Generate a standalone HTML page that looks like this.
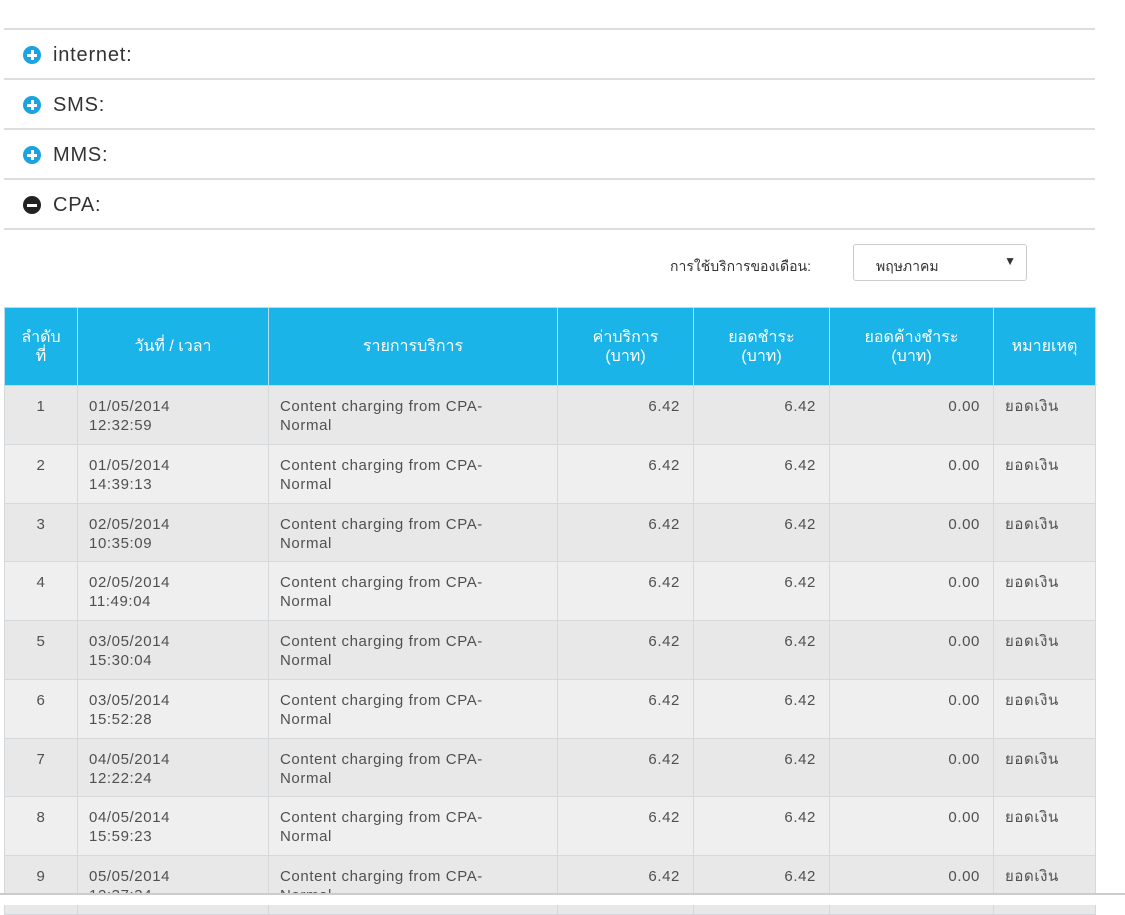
<!DOCTYPE html>
<html><head><meta charset="utf-8"><style>
body{margin:0;width:1125px;height:897px;overflow:hidden;background:#fff;font-family:"Liberation Sans","DejaVu Sans",sans-serif;color:#444;position:relative}
.sec{position:absolute;left:4px;width:1091px;border-top:2px solid #ddd;height:48px}
.sec span{position:absolute;left:49px;top:14px;font-size:20px;color:#333;letter-spacing:.8px}
.ic{position:absolute;left:19px;top:16px;width:18px;height:18px;border-radius:50%;background:#1aa3e0}
.ic:before{content:"";position:absolute;left:4px;top:7.5px;width:10px;height:3px;background:#fff}
.ic.p:after{content:"";position:absolute;left:7.5px;top:4px;width:3px;height:10px;background:#fff}
.ic.m{background:#222}
table{position:absolute;left:4px;top:307px;border-collapse:collapse;table-layout:fixed;width:1091px}
th{background:#1ab4e8;color:#fff;font-weight:normal;font-size:16px;height:77px;border:1px solid #b9dced;line-height:19px;padding:0}
td{height:58.75px;border:1px solid #d6d9dc;vertical-align:top;font-size:15px;padding:11px 11px 0;line-height:19px;box-sizing:border-box;color:#505050;letter-spacing:.6px}
tr:nth-child(even) td{background:#e8e8e8}
tr:nth-child(odd) td{background:#efefef}
td.c{text-align:center}td.r{text-align:right;padding-right:13px}
.bot{position:absolute;left:0;top:893px;width:1125px;height:10px;background:#fff;border-top:2px solid #ccc}
</style></head><body>
<div class="sec" style="top:28px"><div class="ic p"></div><span>internet:</span></div>
<div class="sec" style="top:78px"><div class="ic p"></div><span>SMS:</span></div>
<div class="sec" style="top:128px"><div class="ic p"></div><span>MMS:</span></div>
<div class="sec" style="top:178px;height:48px;border-bottom:2px solid #ddd"><div class="ic m"></div><span>CPA:</span></div>
<div style="position:absolute;left:670px;top:256px;font-size:14px;color:#333">การใช้บริการของเดือน:</div>
<div style="position:absolute;left:853px;top:244px;width:174px;height:37px;border:1px solid #ccc;border-radius:3px;box-sizing:border-box;font-size:14px;color:#333"><span style="position:absolute;left:22px;top:11px">พฤษภาคม</span><span style="position:absolute;right:10px;top:9px;font-size:12px">▼</span></div>
<table>
<colgroup><col style="width:73px"><col style="width:191px"><col style="width:289px"><col style="width:136px"><col style="width:136px"><col style="width:164px"><col style="width:102px"></colgroup>
<tr><th>ลำดับ<br>ที่</th><th>วันที่ / เวลา</th><th>รายการบริการ</th><th>ค่าบริการ<br>(บาท)</th><th>ยอดชำระ<br>(บาท)</th><th>ยอดค้างชำระ<br>(บาท)</th><th>หมายเหตุ</th></tr>
<tr><td class="c">1</td><td>01/05/2014<br>12:32:59</td><td>Content charging from CPA-<br>Normal</td><td class="r">6.42</td><td class="r">6.42</td><td class="r">0.00</td><td>ยอดเงิน</td></tr>
<tr><td class="c">2</td><td>01/05/2014<br>14:39:13</td><td>Content charging from CPA-<br>Normal</td><td class="r">6.42</td><td class="r">6.42</td><td class="r">0.00</td><td>ยอดเงิน</td></tr>
<tr><td class="c">3</td><td>02/05/2014<br>10:35:09</td><td>Content charging from CPA-<br>Normal</td><td class="r">6.42</td><td class="r">6.42</td><td class="r">0.00</td><td>ยอดเงิน</td></tr>
<tr><td class="c">4</td><td>02/05/2014<br>11:49:04</td><td>Content charging from CPA-<br>Normal</td><td class="r">6.42</td><td class="r">6.42</td><td class="r">0.00</td><td>ยอดเงิน</td></tr>
<tr><td class="c">5</td><td>03/05/2014<br>15:30:04</td><td>Content charging from CPA-<br>Normal</td><td class="r">6.42</td><td class="r">6.42</td><td class="r">0.00</td><td>ยอดเงิน</td></tr>
<tr><td class="c">6</td><td>03/05/2014<br>15:52:28</td><td>Content charging from CPA-<br>Normal</td><td class="r">6.42</td><td class="r">6.42</td><td class="r">0.00</td><td>ยอดเงิน</td></tr>
<tr><td class="c">7</td><td>04/05/2014<br>12:22:24</td><td>Content charging from CPA-<br>Normal</td><td class="r">6.42</td><td class="r">6.42</td><td class="r">0.00</td><td>ยอดเงิน</td></tr>
<tr><td class="c">8</td><td>04/05/2014<br>15:59:23</td><td>Content charging from CPA-<br>Normal</td><td class="r">6.42</td><td class="r">6.42</td><td class="r">0.00</td><td>ยอดเงิน</td></tr>
<tr><td class="c">9</td><td>05/05/2014<br>12:37:34</td><td>Content charging from CPA-<br>Normal</td><td class="r">6.42</td><td class="r">6.42</td><td class="r">0.00</td><td>ยอดเงิน</td></tr>
</table>
<div class="bot"></div>
</body></html>
